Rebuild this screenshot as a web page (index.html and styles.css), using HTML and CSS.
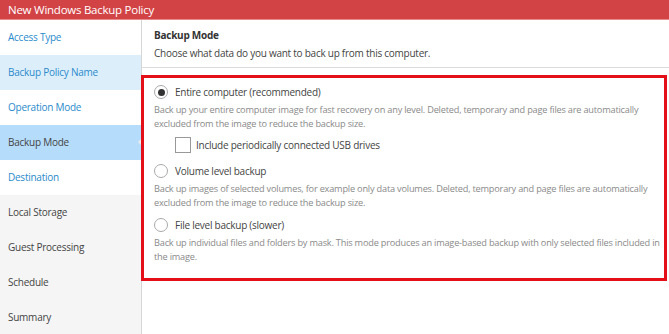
FILE: index.html
```html
<!DOCTYPE html>
<html lang="en">
<head>
    <meta charset="UTF-8">
    <meta name="viewport" content="width=device-width, initial-scale=1.0">
    <title>New Windows Backup Policy</title>
    <link rel="stylesheet" href="styles.css">
</head>
<body>
    <div class="titlebar">New Windows Backup Policy</div>
    <div class="wizard">
        <ul class="steps">
            <li class="step done">Access Type</li>
            <li class="step done tinted">Backup Policy Name</li>
            <li class="step done">Operation Mode</li>
            <li class="step current">Backup Mode</li>
            <li class="step done">Destination</li>
            <li class="step">Local Storage</li>
            <li class="step">Guest Processing</li>
            <li class="step">Schedule</li>
            <li class="step">Summary</li>
        </ul>
        <div class="page">
            <div class="page-header">
                <h2>Backup Mode</h2>
                <p>Choose what data do you want to back up from this computer.</p>
            </div>
            <div class="options">
                <div class="option">
                    <label class="choice"><span class="radio checked"></span>Entire computer (recommended)</label>
                    <p class="hint">Back up your entire computer image for fast recovery on any level. Deleted, temporary and page files are automatically excluded from the image to reduce the backup size.</p>
                    <label class="choice sub"><span class="checkbox"></span>Include periodically connected USB drives</label>
                </div>
                <div class="option">
                    <label class="choice"><span class="radio"></span>Volume level backup</label>
                    <p class="hint">Back up images of selected volumes, for example only data volumes. Deleted, temporary and page files are automatically excluded from the image to reduce the backup size.</p>
                </div>
                <div class="option">
                    <label class="choice"><span class="radio"></span>File level backup (slower)</label>
                    <p class="hint">Back up individual files and folders by mask. This mode produces an image-based backup with only selected files included in the image.</p>
                </div>
            </div>
        </div>
    </div>
</body>
</html>
```

FILE: styles.css
```css
body {
    margin: 0;
    font-family: "Open Sans", Arial, sans-serif;
    color: #444;
    background: #fff;
    overflow: hidden;
}
.titlebar {
    height: 20px;
    line-height: 20px;
    padding-left: 8px;
    background-color: #d24346;
    color: #fff;
    font-size: 11.5px;
    letter-spacing: -0.25px;
    border-bottom: 1px solid #e88a8c;
    box-sizing: border-box;
}
.wizard {
    display: flex;
    height: 314px;
}
.steps {
    list-style: none;
    margin: 0;
    padding: 0;
    width: 141px;
    flex-shrink: 0;
    background-color: #f5f5f5;
    border-right: 1px solid #d6d6d6;
}
.step {
    height: 35px;
    line-height: 35px;
    padding-left: 8px;
    font-size: 10px;
    letter-spacing: -0.25px;
    color: #444;
}
.step.done {
    background-color: #fff;
    color: #2a8bcb;
}
.step.done.tinted {
    background-color: #ddeefb;
}
.step.current {
    position: relative;
    background-color: #b5dcfb;
    color: #444;
}
.step.current::after {
    content: "";
    position: absolute;
    right: 0;
    top: 14px;
    border-top: 3px solid transparent;
    border-bottom: 3px solid transparent;
    border-right: 3px solid #ececec;
}
.page {
    flex: 1;
    min-width: 0;
}
.page-header {
    padding: 7px 12px 6px;
    border-bottom: 1px solid #dcdcdc;
    letter-spacing: -0.25px;
}
.page-header h2 {
    margin: 0;
    font-size: 10px;
    font-weight: bold;
    line-height: 16px;
    color: #333;
}
.page-header p {
    margin: 2px 0 0;
    font-size: 10px;
    line-height: 16px;
}
.options {
    margin: 7px 2px 0 -1px;
    border: 3px solid #e3101a;
    padding: 5px 0 14px 10px;
}
.option {
    margin-bottom: 6px;
}
.option:last-child {
    margin-bottom: 0;
}
.choice {
    display: flex;
    align-items: center;
    gap: 7px;
    font-size: 10px;
    letter-spacing: -0.25px;
    line-height: 18px;
    color: #444;
}
.choice.sub {
    margin: 5px 0 8px 21px;
    gap: 5px;
}
.radio {
    width: 12px;
    height: 12px;
    border: 1px solid #aaa;
    border-radius: 50%;
    display: flex;
    align-items: center;
    justify-content: center;
    background: #fff;
}
.radio.checked::before {
    content: "";
    width: 7px;
    height: 7px;
    border-radius: 50%;
    background: #333;
}
.checkbox {
    width: 14px;
    height: 14px;
    border: 1px solid #999;
    background: #fff;
}
.hint {
    margin: 2px 0 0;
    font-size: 9.2px;
    letter-spacing: -0.2px;
    line-height: 14px;
    color: #8a8a8a;
}
```
